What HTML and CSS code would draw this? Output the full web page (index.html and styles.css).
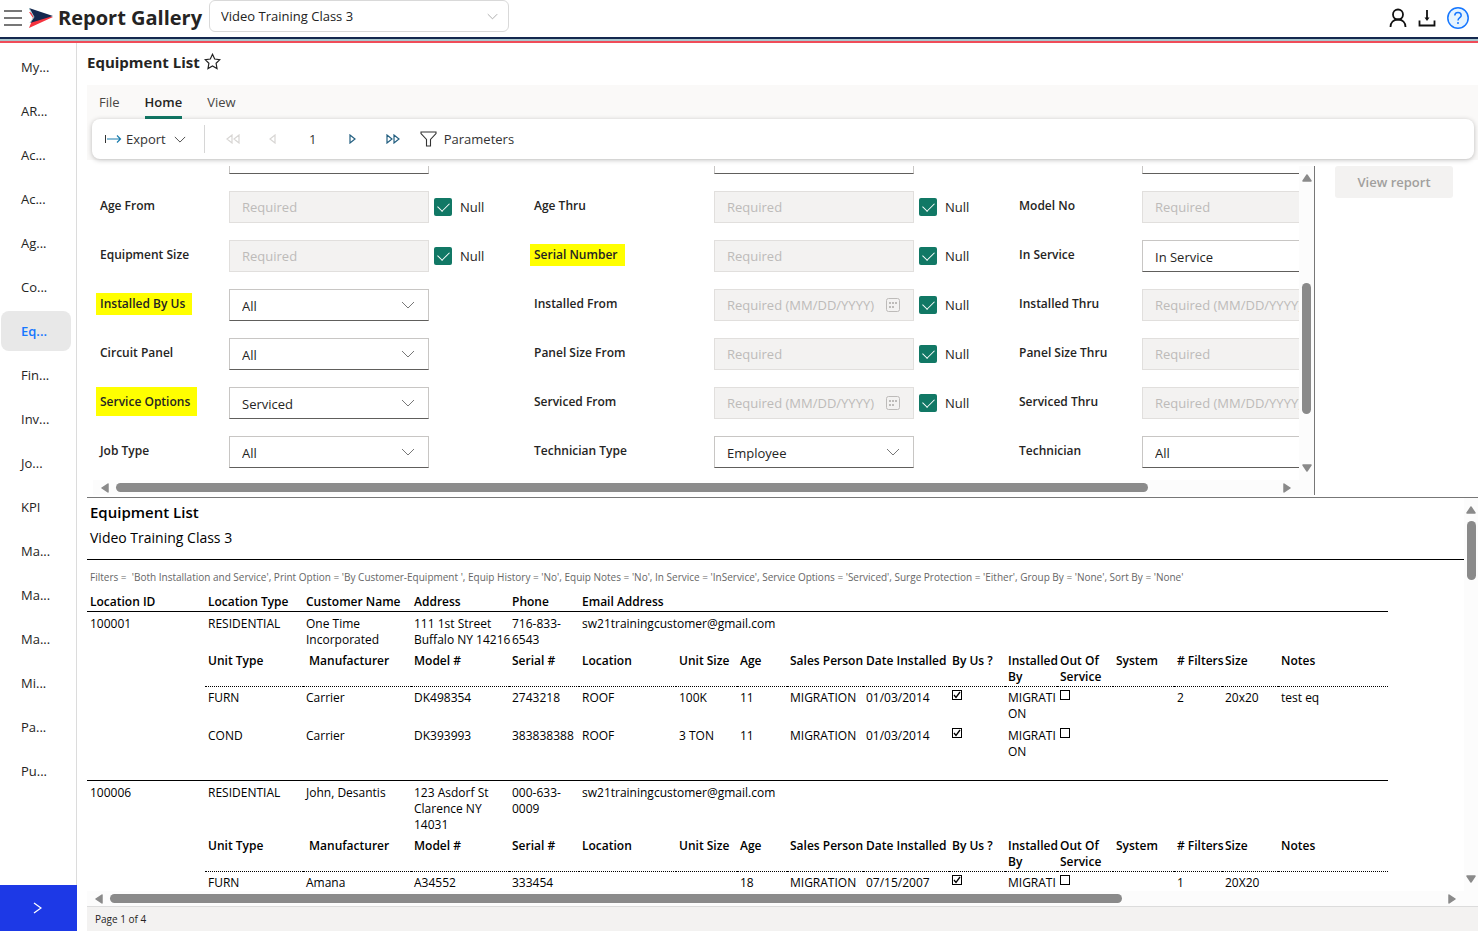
FILE: index.html
```html
<!DOCTYPE html>
<html lang="en">
<head>
<meta charset="utf-8">
<meta name="viewport" content="width=device-width, initial-scale=1">
<title>Report Gallery</title>
<link rel="stylesheet" href="styles.css">
</head>
<body>
<svg class="sprite" aria-hidden="true">
  <symbol id="chevron" viewBox="0 0 14 8"><path d="M1 1l6 6 6-6" fill="none" stroke="currentColor"/></symbol>
  <symbol id="calendar" viewBox="0 0 14 14"><rect x=".5" y=".5" width="13" height="13" rx="2" fill="none" stroke="currentColor"/><path d="M3 5h2M6 5h2M9 5h2M3 9h2M6 9h2" stroke="currentColor" stroke-width="2"/></symbol>
  <symbol id="up" viewBox="0 0 10 8"><path d="M5 1L9 7H1z" fill="currentColor" stroke="currentColor" stroke-width="1.500" stroke-linejoin="round"/></symbol>
  <symbol id="down" viewBox="0 0 10 8"><path d="M5 7L9 1H1z" fill="currentColor" stroke="currentColor" stroke-width="1.500" stroke-linejoin="round"/></symbol>
  <symbol id="left" viewBox="0 0 8 10"><path d="M1 5L7 1v8z" fill="currentColor" stroke="currentColor" stroke-width="1.500" stroke-linejoin="round"/></symbol>
  <symbol id="right" viewBox="0 0 8 10"><path d="M7 5L1 1v8z" fill="currentColor" stroke="currentColor" stroke-width="1.500" stroke-linejoin="round"/></symbol>
  <symbol id="ticked" viewBox="0 0 10 10"><rect x=".5" y=".5" width="9" height="9" fill="none" stroke="#000"/><path d="M2 5l2 2.500L8 2" fill="none" stroke="#000" stroke-width="1.300"/></symbol>
  <symbol id="unticked" viewBox="0 0 10 10"><rect x=".5" y=".5" width="9" height="9" fill="none" stroke="#000"/></symbol>
</svg>
<header class="topbar">
  <button class="icon-button" aria-label="Menu"><svg width="18" height="16" viewBox="0 0 18 16"><path d="M0 1h18M0 8h18M0 15h18" stroke="#777" stroke-width="2"/></svg></button>
  <svg class="logo" width="24" height="20" viewBox="0 0 24 20"><path d="M0 4l4 6-4 10 24-11z" fill="#f5333f"/><path d="M0 0l24 8L1 15l4-6z" fill="#14284f"/><path d="M0 0l5 9-4 6" fill="none" stroke="#a9c9d0"/></svg>
  <span class="brand">Report Gallery</span>
  <span class="company"><select aria-label="Company"><option>Video Training Class 3</option></select><svg width="11" height="7"><use href="#chevron"/></svg></span>
  <div class="account">
    <button class="icon-button" aria-label="Account"><svg width="18" height="20" viewBox="0 0 18 20" fill="none" stroke="#111" stroke-width="1.800"><circle cx="9" cy="6.500" r="5"/><path d="M1.500 19c0-4.500 3-7.500 7.500-7.500s7.500 3 7.500 7.500"/></svg></button>
    <button class="icon-button" aria-label="Download"><svg width="18" height="18" viewBox="0 0 18 18" fill="none" stroke="#111" stroke-width="1.800"><path d="M9 1v9M1.500 11.500v5h15v-5"/><path d="M6.500 8.500h5L9 12z" fill="#111" stroke="none"/></svg></button>
    <button class="icon-button" aria-label="Help"><svg width="22" height="22" viewBox="0 0 22 22" fill="none" stroke="#1677ff"><circle cx="11" cy="11" r="10.200" fill="#e6f4ff" stroke-width="1.500"/><path d="M7.800 8.600c0-2 1.400-3.200 3.200-3.200s3.200 1.200 3.200 3c0 2.200-3.200 2.400-3.200 5" stroke-width="1.500"/><circle cx="11" cy="16" r=".6" fill="#1677ff"/></svg></button>
  </div>
</header>
<div class="shell">
  <aside class="sidebar">
    <nav class="menu">
      <a href="#">My...</a><a href="#">AR...</a><a href="#">Ac...</a><a href="#">Ac...</a><a href="#">Ag...</a><a href="#">Co...</a><a href="#" class="active">Eq...</a><a href="#">Fin...</a><a href="#">Inv...</a><a href="#">Jo...</a><a href="#">KPI</a><a href="#">Ma...</a><a href="#">Ma...</a><a href="#">Ma...</a><a href="#">Mi...</a><a href="#">Pa...</a><a href="#">Pu...</a>
    </nav>
    <button class="expand" aria-label="Expand menu"><svg width="9" height="12" viewBox="0 0 9 12"><path d="M1 1l7 5-7 5" fill="none" stroke="#fff" stroke-width="1.300"/></svg></button>
  </aside>
  <main class="main">
    <h1 class="title">Equipment List <svg width="17" height="17" viewBox="0 0 17 17"><path d="M8.500 1.300l2.200 4.700 5.100.7-3.700 3.600.9 5.200-4.500-2.500L4 15.500l.9-5.200L1.200 6.700 6.300 6z" fill="none" stroke="#222" stroke-width="1.200"/></svg></h1>
    <div class="commands">
      <div class="tabs"><button>File</button><button class="selected">Home</button><button>View</button></div>
      <div class="ribbon">
        <button class="export"><svg width="17" height="10" viewBox="0 0 17 10" fill="none"><path d="M.5 1v8" stroke="#333"/><path d="M2 5h14M12 1.500L15.500 5 12 8.500" stroke="#1a7cad" stroke-width="1.200"/></svg><span>Export</span><svg class="export-chevron" width="12" height="7"><use href="#chevron"/></svg></button>
        <div class="pager">
          <button aria-label="First page" disabled><svg width="14" height="10" viewBox="0 0 14 10"><path d="M6 1v8L1 5zM13 1v8L8 5z"/></svg></button>
          <button aria-label="Previous page" disabled><svg width="7" height="10" viewBox="0 0 7 10"><path d="M6 1v8L1 5z"/></svg></button>
          <input aria-label="Page" value="1">
          <button aria-label="Next page"><svg width="7" height="10" viewBox="0 0 7 10"><path d="M1 1v8l5-4z"/></svg></button>
          <button aria-label="Last page"><svg width="14" height="10" viewBox="0 0 14 10"><path d="M1 1v8l5-4zM8 1v8l5-4z"/></svg></button>
        </div>
        <button class="parameters"><svg width="17" height="16" viewBox="0 0 17 16"><path d="M1 1h15v1.500l-5.500 6V15h-4V8.500L1 2.500z" fill="none" stroke="#333" stroke-width="1.100"/></svg><span>Parameters</span></button>
      </div>
    </div>
    <section class="filters">
      <div class="scrollbox">
        <div class="viewport form-view">
          <form class="form">
            <span></span><div class="field"><span class="pick"><select aria-label="Group"><option></option></select></span></div>
            <span></span><div class="field"><span class="pick"><select aria-label="Sort"><option></option></select></span></div>
            <span></span><div class="field"><span class="pick"><select aria-label="Print"><option></option></select></span></div>

            <label for="f1">Age From</label><div class="field"><input class="text" id="f1" placeholder="Required" disabled><label class="null"><input type="checkbox" checked>Null</label></div>
            <label for="f2">Age Thru</label><div class="field"><input class="text" id="f2" placeholder="Required" disabled><label class="null"><input type="checkbox" checked>Null</label></div>
            <label for="f3">Model No</label><div class="field"><input class="text" id="f3" placeholder="Required" disabled></div>

            <label for="f4">Equipment Size</label><div class="field"><input class="text" id="f4" placeholder="Required" disabled><label class="null"><input type="checkbox" checked>Null</label></div>
            <label for="f5"><mark>Serial Number</mark></label><div class="field"><input class="text" id="f5" placeholder="Required" disabled><label class="null"><input type="checkbox" checked>Null</label></div>
            <label for="f6">In Service</label><div class="field"><span class="pick"><select id="f6"><option>In Service</option></select></span></div>

            <label for="f7"><mark>Installed By Us</mark></label><div class="field"><span class="pick"><select id="f7"><option>All</option></select><svg width="14" height="8"><use href="#chevron"/></svg></span></div>
            <label for="f8">Installed From</label><div class="field"><span class="pick date"><input class="text" id="f8" placeholder="Required (MM/DD/YYYY)" disabled><svg width="14" height="14"><use href="#calendar"/></svg></span><label class="null"><input type="checkbox" checked>Null</label></div>
            <label for="f9">Installed Thru</label><div class="field"><span class="pick date"><input class="text" id="f9" placeholder="Required (MM/DD/YYYY)" disabled></span></div>

            <label for="f10">Circuit Panel</label><div class="field"><span class="pick"><select id="f10"><option>All</option></select><svg width="14" height="8"><use href="#chevron"/></svg></span></div>
            <label for="f11">Panel Size From</label><div class="field"><input class="text" id="f11" placeholder="Required" disabled><label class="null"><input type="checkbox" checked>Null</label></div>
            <label for="f12">Panel Size Thru</label><div class="field"><input class="text" id="f12" placeholder="Required" disabled></div>

            <label for="f13"><mark class="tall">Service Options</mark></label><div class="field"><span class="pick"><select id="f13"><option>Serviced</option></select><svg width="14" height="8"><use href="#chevron"/></svg></span></div>
            <label for="f14">Serviced From</label><div class="field"><span class="pick date"><input class="text" id="f14" placeholder="Required (MM/DD/YYYY)" disabled><svg width="14" height="14"><use href="#calendar"/></svg></span><label class="null"><input type="checkbox" checked>Null</label></div>
            <label for="f15">Serviced Thru</label><div class="field"><span class="pick date"><input class="text" id="f15" placeholder="Required (MM/DD/YYYY)" disabled></span></div>

            <label for="f16">Job Type</label><div class="field"><span class="pick"><select id="f16"><option>All</option></select><svg width="14" height="8"><use href="#chevron"/></svg></span></div>
            <label for="f17">Technician Type</label><div class="field"><span class="pick"><select id="f17"><option>Employee</option></select><svg width="14" height="8"><use href="#chevron"/></svg></span></div>
            <label for="f18">Technician</label><div class="field"><span class="pick"><select id="f18"><option>All</option></select></span></div>
          </form>
        </div>
        <div class="bar vertical"><svg width="10" height="8"><use href="#up"/></svg><div class="rail"><div class="thumb" style="top:35%;height:49%"></div></div><svg width="10" height="8"><use href="#down"/></svg></div>
        <div class="bar horizontal"><svg width="8" height="10"><use href="#left"/></svg><div class="rail"><div class="thumb" style="left:0;width:89%"></div></div><svg width="8" height="10"><use href="#right"/></svg></div>
        <div class="bar"></div>
      </div>
      <div class="actions"><button class="view-report" disabled>View report</button></div>
    </section>
    <section class="report scrollbox">
      <div class="viewport">
        <header class="report-head"><h2>Equipment List</h2><p>Video Training Class 3</p></header>
        <p class="criteria">Filters = &nbsp;'Both Installation and Service', Print Option = 'By Customer-Equipment ', Equip History = 'No', Equip Notes = 'No', In Service = 'InService', Service Options = 'Serviced', Surge Protection = 'Either', Group By = 'None', Sort By = 'None'</p>
        <table class="listing">
          <colgroup><col class="w118"><col class="w98"><col class="w108"><col class="w98"><col class="w70"><col class="w97"><col class="w61"><col class="w50"><col class="w76"><col class="w86"><col class="w56"><col class="w52"><col class="w56"><col class="w61"><col class="w48"><col class="w56"><col class="w110"></colgroup>
          <thead><tr class="heads"><th>Location ID</th><th>Location Type</th><th>Customer Name</th><th>Address</th><th>Phone</th><th colspan="12">Email Address</th></tr></thead>
          <tbody>
            <tr class="customer"><td>100001</td><td>RESIDENTIAL</td><td>One Time<br>Incorporated</td><td>111 1st Street<br>Buffalo NY 14216</td><td>716-833-<br>6543</td><td colspan="12">sw21trainingcustomer@gmail.com</td></tr>
            <tr class="units"><td></td><th>Unit Type</th><th class="inset">Manufacturer</th><th>Model #</th><th>Serial #</th><th>Location</th><th>Unit Size</th><th>Age</th><th>Sales Person</th><th>Date Installed</th><th>By Us ?</th><th>Installed<br>By</th><th>Out Of<br>Service</th><th>System</th><th># Filters</th><th>Size</th><th>Notes</th></tr>
            <tr class="unit"><td></td><td>FURN</td><td>Carrier</td><td>DK498354</td><td>2743218</td><td>ROOF</td><td>100K</td><td>11</td><td>MIGRATION</td><td>01/03/2014</td><td><svg width="10" height="10"><use href="#ticked"/></svg></td><td>MIGRATI<br>ON</td><td><svg width="10" height="10"><use href="#unticked"/></svg></td><td></td><td>2</td><td>20x20</td><td>test eq</td></tr>
            <tr class="unit"><td></td><td>COND</td><td>Carrier</td><td>DK393993</td><td>383838388</td><td>ROOF</td><td>3 TON</td><td>11</td><td>MIGRATION</td><td>01/03/2014</td><td><svg width="10" height="10"><use href="#ticked"/></svg></td><td>MIGRATI<br>ON</td><td><svg width="10" height="10"><use href="#unticked"/></svg></td><td></td><td></td><td></td><td></td></tr>
            <tr class="spacer"><td colspan="17"></td></tr>
          </tbody>
          <tbody>
            <tr class="customer"><td>100006</td><td>RESIDENTIAL</td><td>John, Desantis</td><td>123 Asdorf St<br>Clarence NY<br>14031</td><td>000-633-<br>0009</td><td colspan="12">sw21trainingcustomer@gmail.com</td></tr>
            <tr class="units"><td></td><th>Unit Type</th><th class="inset">Manufacturer</th><th>Model #</th><th>Serial #</th><th>Location</th><th>Unit Size</th><th>Age</th><th>Sales Person</th><th>Date Installed</th><th>By Us ?</th><th>Installed<br>By</th><th>Out Of<br>Service</th><th>System</th><th># Filters</th><th>Size</th><th>Notes</th></tr>
            <tr class="unit"><td></td><td>FURN</td><td>Amana</td><td>A34552</td><td>333454</td><td></td><td></td><td>18</td><td>MIGRATION</td><td>07/15/2007</td><td><svg width="10" height="10"><use href="#ticked"/></svg></td><td>MIGRATI</td><td><svg width="10" height="10"><use href="#unticked"/></svg></td><td></td><td>1</td><td>20X20</td><td></td></tr>
          </tbody>
        </table>
      </div>
      <div class="bar vertical"><svg width="10" height="8"><use href="#up"/></svg><div class="rail"><div class="thumb" style="top:0;height:17%"></div></div><svg width="10" height="8"><use href="#down"/></svg></div>
      <div class="bar horizontal"><svg width="8" height="10"><use href="#left"/></svg><div class="rail"><div class="thumb" style="left:0;width:76%"></div></div><svg width="8" height="10"><use href="#right"/></svg></div>
      <div class="bar"></div>
    </section>
    <footer class="status">Page 1 of 4</footer>
  </main>
</div>
</body>
</html>
```

FILE: styles.css
```css
* { box-sizing: border-box; }
body { margin: 0; height: 100vh; display: flex; flex-direction: column; overflow: hidden; background: #fff; color: #252423; font: 13px/20px "Open Sans", "Noto Sans", sans-serif; }
button, input, select { font: inherit; color: inherit; border: 0; padding: 0; margin: 0; background: none; }
select { appearance: none; }
h1, h2, p { margin: 0; }
svg { display: block; flex: none; }
.sprite { position: absolute; width: 0; height: 0; }

.topbar { flex: none; display: flex; align-items: center; height: 43px; padding: 0 9px 8px 4px; background: linear-gradient(#14284f 2px, #a9c6cc 2px 4px, #f04c59 4px) bottom / 100% 6px no-repeat; }
.icon-button { display: flex; align-items: center; }
.logo { margin: 0 5px 0 7px; }
.brand { font-size: 20px; line-height: 28px; font-weight: 700; }
.company { display: grid; align-items: center; align-self: flex-start; width: 300px; height: 32px; margin-left: 7px; color: #222; }
.company select { grid-area: 1 / 1; height: 32px; padding: 0 11px; border: 1px solid #d9d9d9; border-radius: 6px; }
.company svg { grid-area: 1 / 1; justify-self: end; margin-right: 11px; color: #999; pointer-events: none; }
.account { display: flex; align-items: center; gap: 11px; margin-left: auto; }

.shell { flex: 1; min-height: 0; display: flex; }
.sidebar { flex: none; width: 77px; display: flex; flex-direction: column; border-right: 1px solid #dcdcdc; }
.menu { flex: 1; min-height: 0; display: flex; flex-direction: column; gap: 4px; padding: 4px 5px 0 1px; }
.menu a { height: 40px; padding-left: 20px; border-radius: 8px; line-height: 40px; color: #252423; text-decoration: none; }
.menu .active { background: #e8e8e8; color: #1677ff; font-weight: 600; }
.expand { height: 46px; margin-right: -1px; padding-right: 3px; display: grid; place-items: center; background: #1d39e6; }

.main { flex: 1; min-width: 0; display: flex; flex-direction: column; padding-left: 10px; }
.title { display: flex; align-items: center; gap: 4px; height: 42px; padding-bottom: 5px; font-size: 15px; font-weight: 700; }
.commands { padding: 0 4px 1px 5px; background: #faf9f8; }
.tabs { display: flex; gap: 25px; height: 34px; padding: 0 7px; color: #484644; }
.tabs .selected { color: #252423; font-weight: 600; background: linear-gradient(#117865, #117865) bottom / 100% 3px no-repeat; }
.ribbon { position: relative; display: flex; align-items: center; height: 40px; padding-left: 13px; background: #fff; border-radius: 8px; box-shadow: 0 1px 5px rgba(0, 0, 0, .25); color: #333; }
.export { display: flex; align-items: center; gap: 4px; padding-right: 18px; }
.export-chevron { margin-left: 4px; }
.pager { display: flex; align-items: center; height: 28px; padding: 0 7px 0 8px; border-left: 1px solid #d6d6d6; }
.pager button { width: 40px; height: 28px; display: grid; place-items: center; }
.pager input { width: 40px; text-align: center; }
.pager path { fill: none; stroke: #235f80; stroke-width: 1.2px; }
.pager button:disabled path { stroke: #d8d6d4; }
.parameters { display: flex; align-items: center; gap: 7px; }

.filters { flex: none; display: flex; height: 338px; padding: 6px 0 2px; border-bottom: 1px solid #777; }
.scrollbox { display: grid; grid-template: minmax(0, 1fr) 15px / minmax(0, 1fr) 15px; }
.filters .scrollbox { flex: 1; min-width: 0; margin-left: 6px; border-right: 1px solid #777; }
.viewport { overflow: hidden; min-width: 0; min-height: 0; }
.form-view { display: flex; flex-direction: column; justify-content: flex-end; padding: 0 0 12px 7px; }
.form { display: grid; grid-template-columns: 129px 305px 180px 305px 123px 305px; row-gap: 17px; }
.form > label { padding-top: 5px; font-size: 12px; font-weight: 600; }
mark { display: block; width: max-content; margin: -1px 0 -1px -4px; padding: 1px 7px 1px 4px; background: #ff0; color: inherit; }
.tall { margin-top: -5px; padding: 5px 7px 4px 4px; }
.field { display: flex; align-items: center; gap: 5px; height: 32px; }
.text { width: 200px; height: 32px; padding: 0 12px; background: #f3f2f1; border: 1px solid #e1dfdd; }
.text::placeholder { color: #bdbbb9; opacity: 1; }
.pick { display: grid; width: 200px; align-items: center; }
.pick > * { grid-area: 1 / 1; }
.pick svg { justify-self: end; margin-right: 14px; color: #777; pointer-events: none; }
.pick select { height: 32px; padding: 2px 12px 0; border: 1px solid #c8c6c4; border-bottom-color: #605e5c; }
.date .text { padding-right: 34px; }
.date svg { color: #bdbbb9; }
.null { display: flex; align-items: center; gap: 8px; }
.null input { appearance: none; display: grid; place-items: center; width: 18px; height: 18px; border-radius: 2px; background: #117865; }
.null input::after { content: ""; width: 10px; height: 6px; margin-top: -3px; border: solid #fff; border-width: 0 0 1px 1px; transform: rotate(-45deg); }
.actions { flex: none; width: 163px; padding-left: 20px; }
.view-report { width: 118px; height: 32px; border-radius: 3px; background: #f3f2f1; color: #a19f9d; font-weight: 600; }

.bar { display: flex; align-items: center; gap: 7px; background: #fcfcfc; color: #8a8a8a; }
.vertical { flex-direction: column; padding: 8px 0; }
.horizontal { padding: 0 8px; }
.rail { position: relative; flex: 1; }
.vertical .rail { width: 9px; }
.horizontal .rail { height: 9px; }
.thumb { position: absolute; border-radius: 5px; background: #8a8a8a; }
.vertical .thumb { width: 9px; }
.horizontal .thumb { height: 9px; }

.report { flex: 1; min-height: 0; grid-template-columns: minmax(0, 1fr) 14px; color: #000; }
.report-head { padding: 2px 3px 9px; border-bottom: 1px solid #000; font-size: 14px; line-height: 25px; }
.report-head h2 { font-size: 15px; font-weight: 600; }
.criteria { padding: 9px 3px 8px; font-size: 10px; line-height: 16px; color: #666; white-space: nowrap; }
.listing { width: 1301px; table-layout: fixed; border-collapse: separate; border-spacing: 0; font-size: 12px; line-height: 16px; }
.listing th, .listing td { padding: 0 0 0 3px; text-align: left; vertical-align: top; white-space: nowrap; }
.listing th { font-weight: 600; }
.listing .heads th { padding-top: 1px; padding-bottom: 1px; border-bottom: 1px solid #000; }
.listing .customer td { padding-top: 4px; }
.listing .units th { padding-top: 5px; padding-bottom: 1px; border-bottom: 1px dotted #000; }
.listing .units .inset { padding-left: 6px; }
.listing .unit td { padding-top: 3px; padding-bottom: 3px; }
.listing .spacer td { height: 18px; border-bottom: 1px solid #000; }
.w48 { width: 48px; }
.w50 { width: 50px; }
.w52 { width: 52px; }
.w56 { width: 56px; }
.w61 { width: 61px; }
.w70 { width: 70px; }
.w76 { width: 76px; }
.w86 { width: 86px; }
.w97 { width: 97px; }
.w98 { width: 98px; }
.w108 { width: 108px; }
.w110 { width: 110px; }
.w118 { width: 118px; }

.status { flex: none; height: 25px; padding: 0 8px; border-top: 1px solid #dcdcdc; background: #f3f2f1; font-size: 10px; line-height: 24px; }
```
